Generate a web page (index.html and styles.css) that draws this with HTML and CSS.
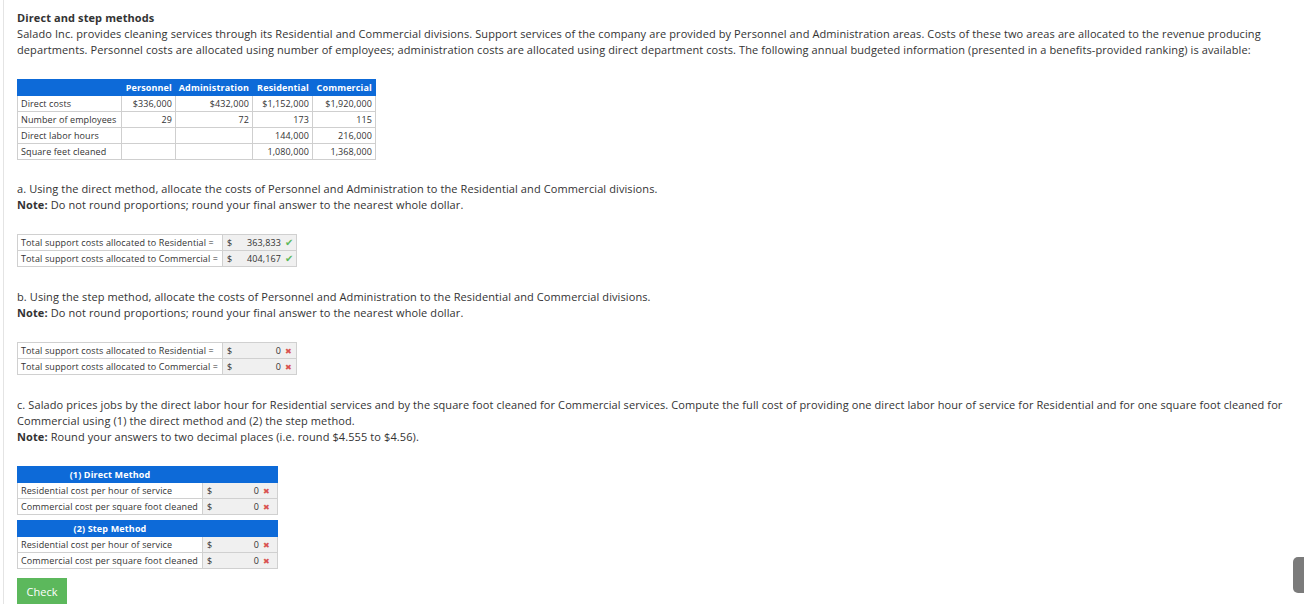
FILE: index.html
```html
<!DOCTYPE html>
<html>
<head>
<meta charset="utf-8">
<link rel="stylesheet" href="styles.css">
</head>
<body>
<div class="frame">
  <div class="content">
    <h1 class="title">Direct and step methods</h1>
    <p class="para">Salado Inc. provides cleaning services through its Residential and Commercial divisions. Support services of the company are provided by Personnel and Administration areas. Costs of these two areas are allocated to the revenue producing departments. Personnel costs are allocated using number of employees; administration costs are allocated using direct department costs. The following annual budgeted information (presented in a benefits-provided ranking) is available:</p>

    <table class="data">
      <colgroup><col class="c1"><col class="c2"><col class="c3"><col class="c4"><col class="c5"></colgroup>
      <thead>
        <tr><th></th><th>Personnel</th><th>Administration</th><th>Residential</th><th>Commercial</th></tr>
      </thead>
      <tbody>
        <tr><td class="lbl">Direct costs</td><td>$336,000</td><td>$432,000</td><td>$1,152,000</td><td>$1,920,000</td></tr>
        <tr><td class="lbl">Number of employees</td><td>29</td><td>72</td><td>173</td><td>115</td></tr>
        <tr><td class="lbl">Direct labor hours</td><td></td><td></td><td>144,000</td><td>216,000</td></tr>
        <tr><td class="lbl">Square feet cleaned</td><td></td><td></td><td>1,080,000</td><td>1,368,000</td></tr>
      </tbody>
    </table>

    <p class="para">a. Using the direct method, allocate the costs of Personnel and Administration to the Residential and Commercial divisions.<br><b>Note:</b> Do not round proportions; round your final answer to the nearest whole dollar.</p>

    <table class="ans ans-ab">
      <colgroup><col class="ca"><col class="cb"></colgroup>
      <tr><td class="lbl">Total support costs allocated to Residential =</td><td class="inp"><span class="cur">$</span><span class="val">363,833</span><span class="ok">&#10004;</span></td></tr>
      <tr><td class="lbl">Total support costs allocated to Commercial =</td><td class="inp"><span class="cur">$</span><span class="val">404,167</span><span class="ok">&#10004;</span></td></tr>
    </table>

    <p class="para">b. Using the step method, allocate the costs of Personnel and Administration to the Residential and Commercial divisions.<br><b>Note:</b> Do not round proportions; round your final answer to the nearest whole dollar.</p>

    <table class="ans ans-ab">
      <colgroup><col class="ca"><col class="cb"></colgroup>
      <tr><td class="lbl">Total support costs allocated to Residential =</td><td class="inp"><span class="cur">$</span><span class="val">0</span><span class="bad">&#10006;</span></td></tr>
      <tr><td class="lbl">Total support costs allocated to Commercial =</td><td class="inp"><span class="cur">$</span><span class="val">0</span><span class="bad">&#10006;</span></td></tr>
    </table>

    <p class="para">c. Salado prices jobs by the direct labor hour for Residential services and by the square foot cleaned for Commercial services. Compute the full cost of providing one direct labor hour of service for Residential and for one square foot cleaned for Commercial using (1) the direct method and (2) the step method.<br><b>Note:</b> Round your answers to two decimal places (i.e. round $4.555 to $4.56).</p>

    <table class="ans ans-c">
      <colgroup><col class="ca"><col class="cb"></colgroup>
      <tr class="head"><th>(1) Direct Method</th><th></th></tr>
      <tr><td class="lbl">Residential cost per hour of service</td><td class="inp"><span class="cur">$</span><span class="val">0</span><span class="bad">&#10006;</span></td></tr>
      <tr><td class="lbl">Commercial cost per square foot cleaned</td><td class="inp"><span class="cur">$</span><span class="val">0</span><span class="bad">&#10006;</span></td></tr>
    </table>
    <table class="ans ans-c second">
      <colgroup><col class="ca"><col class="cb"></colgroup>
      <tr class="head"><th>(2) Step Method</th><th></th></tr>
      <tr><td class="lbl">Residential cost per hour of service</td><td class="inp"><span class="cur">$</span><span class="val">0</span><span class="bad">&#10006;</span></td></tr>
      <tr><td class="lbl">Commercial cost per square foot cleaned</td><td class="inp"><span class="cur">$</span><span class="val">0</span><span class="bad">&#10006;</span></td></tr>
    </table>

    <button class="check">Check</button>
  </div>
</div>
<div class="scroll-thumb"></div>
</body>
</html>
```

FILE: styles.css
```css
html, body {
  margin: 0;
  padding: 0;
  background: #ffffff;
  overflow: hidden;
}

body {
  font-family: "Open Sans", "Liberation Sans", sans-serif;
  color: #333333;
  font-size: 11px;
  line-height: 16px;
}

.frame {
  margin-left: 3px;
  border-left: 1px solid #e4e4e4;
  height: 604px;
}

.content {
  padding: 10px 14px 0 13px;
}

.title {
  margin: 0;
  font-size: 11px;
  line-height: 16px;
  font-weight: 700;
  color: #333333;
  letter-spacing: 0.1px;
}

.para {
  margin: 0 0 21px 0;
  letter-spacing: 0.1px;
}

.para b {
  font-weight: 700;
}

table {
  border-collapse: collapse;
  font-size: 9px;
  line-height: 14px;
}

.data {
  width: 358px;
  margin-bottom: 21px;
  table-layout: fixed;
}

.data .c1 { width: 104px; }
.data .c2 { width: 54px; }
.data .c3 { width: 77px; }
.data .c4 { width: 60px; }
.data .c5 { width: 63px; }

.data th {
  background: #0d6ad8;
  color: #ffffff;
  font-weight: 700;
  text-align: right;
  padding: 1px 3px 0 0;
  height: 14px;
  white-space: nowrap;
  border: 1px solid #0d6ad8;
  letter-spacing: 0.15px;
}

.data td {
  border: 1px solid #cfcfcf;
  padding: 0 3px;
  height: 15px;
  text-align: right;
  white-space: nowrap;
  letter-spacing: 0.1px;
}

.data td.lbl {
  text-align: left;
}

.ans {
  margin-bottom: 22px;
  table-layout: fixed;
}

.ans td {
  border: 1px solid #d0d0d0;
  height: 15px;
  padding: 0;
  white-space: nowrap;
  letter-spacing: 0.12px;
}

.ans td.lbl {
  padding: 0 3px;
  background: #ffffff;
}

.ans td.inp {
  background: #f0f0f0;
  position: relative;
}

.inp .cur {
  display: inline-block;
  padding-left: 4px;
}

.inp .val {
  position: absolute;
  top: 0;
  line-height: 15px;
}

.ans-ab { width: 279px; }
.ans-ab .ca { width: 205px; }
.ans-ab .cb { width: 74px; }
.ans-ab .val { right: 15px; }

.ans-c { width: 260px; margin-bottom: 5px; }
.ans-c .ca { width: 185px; }
.ans-c .cb { width: 75px; }
.ans-c .val { right: 18px; }
.ans-c.second { margin-bottom: 9px; }

.ok, .bad {
  position: absolute;
  top: 0;
  line-height: 15px;
}

.ok {
  color: #5cb85c;
  right: 3px;
  font-size: 10px;
}

.bad {
  color: #d9534f;
  right: 4px;
  font-size: 8px;
}

.ans-c .bad { right: 7px; }

.ans .head th {
  background: #0d6ad8;
  color: #ffffff;
  font-weight: 700;
  height: 15px;
  padding: 0;
  border: 1px solid #0d6ad8;
  text-align: center;
  letter-spacing: 0.15px;
}

.check {
  display: block;
  width: 50px;
  height: 26px;
  border: none;
  background: #5cb85c;
  color: #ffffff;
  font-family: "Open Sans", "Liberation Sans", sans-serif;
  font-size: 11px;
  padding: 0;
  cursor: pointer;
}

.scroll-thumb {
  position: fixed;
  right: 0;
  top: 557px;
  width: 11px;
  height: 36px;
  background: #7b7b7b;
  border-radius: 5px 0 0 5px;
}
```
